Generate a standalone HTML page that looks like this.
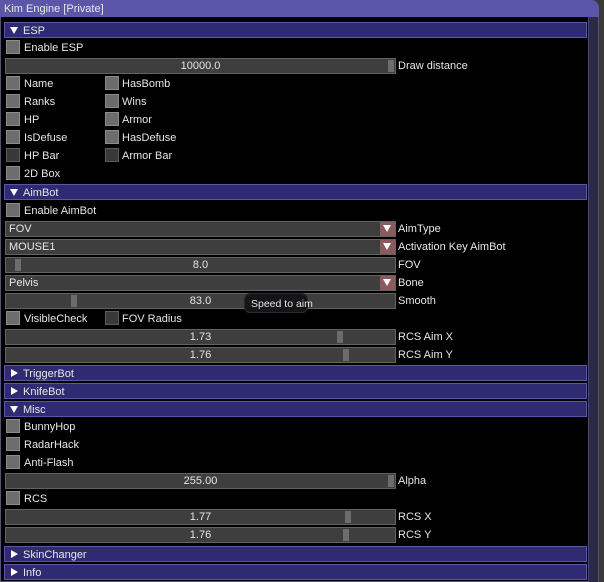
<!DOCTYPE html>
<html><head><style>
*{margin:0;padding:0;box-sizing:border-box}
body{width:604px;height:582px;background:#3a3838;position:relative;overflow:hidden;font-family:"Liberation Sans",sans-serif;font-size:11px;color:#e6e6e6}
.win{position:absolute;left:0;top:0;width:599px;height:582px;background:#000;border:1px solid #55537a;border-radius:0 8px 0 0}
.title{position:absolute;left:0;top:0;width:599px;height:17px;background:#5b56a8;border-radius:0 8px 0 0;padding:3px 0 0 4px;color:#e8e8f0}
.sb{position:absolute;left:588px;top:17px;width:10px;height:565px;background:#2b2a45;border-left:1px solid #4a4870}
.h{position:absolute;left:4px;width:583px;height:16px;background:#2f2b72;border:1px solid #5a56a4;padding:2px 0 0 18px}
.h:before{content:"";position:absolute;left:5px;top:4px;border-left:4px solid transparent;border-right:4px solid transparent;border-top:7px solid #fff}
.h.c:before{left:6px;top:3px;border-top:4px solid transparent;border-bottom:4px solid transparent;border-left:7px solid #fff;border-right:0}
.cb{position:absolute;width:14px;height:14px;background:#6c6c6c;border:1px solid #8c8c8c}
.cb.d{background:#383838;border-color:#5c5c5c}
.l{position:absolute;margin-top:1px}
.f{position:absolute;left:5px;width:391px;height:16px;background:#3e3e3e;border:1px solid #626262;text-align:center;line-height:15px}
.f.cm{text-align:left;padding-left:3px}
.g{position:absolute;top:1px;width:6px;height:12px;background:#6c6c6c}
.ar{position:absolute;right:0;top:0;width:15px;height:14px;background:#8a5a5e}
.ar:after{content:"";position:absolute;left:3px;top:3px;border-left:4px solid transparent;border-right:4px solid transparent;border-top:7px solid #fff}
.tt{position:absolute;left:244px;top:293px;width:64px;height:20px;background:#151518;border:1px solid #2a2a30;border-radius:6px;padding:4px 0 0 6px;font-size:10.5px;white-space:nowrap}
</style></head><body>
<div class="win"></div>
<div class="title">Kim Engine [Private]</div>
<div class="sb"></div>

<div class="h" style="top:22px">ESP</div>
<div class="cb" style="left:6px;top:40px"></div><div class="l" style="left:24px;top:41px">Enable ESP</div>
<div class="f" style="top:58px">10000.0<div class="g" style="left:382px"></div></div><div class="l" style="left:398px;top:59px">Draw distance</div>
<div class="cb" style="left:6px;top:76px"></div><div class="l" style="left:24px;top:77px">Name</div>
<div class="cb" style="left:105px;top:76px"></div><div class="l" style="left:122px;top:77px">HasBomb</div>
<div class="cb" style="left:6px;top:94px"></div><div class="l" style="left:24px;top:95px">Ranks</div>
<div class="cb" style="left:105px;top:94px"></div><div class="l" style="left:122px;top:95px">Wins</div>
<div class="cb" style="left:6px;top:112px"></div><div class="l" style="left:24px;top:113px">HP</div>
<div class="cb" style="left:105px;top:112px"></div><div class="l" style="left:122px;top:113px">Armor</div>
<div class="cb" style="left:6px;top:130px"></div><div class="l" style="left:24px;top:131px">IsDefuse</div>
<div class="cb" style="left:105px;top:130px"></div><div class="l" style="left:122px;top:131px">HasDefuse</div>
<div class="cb d" style="left:6px;top:148px"></div><div class="l" style="left:24px;top:149px">HP Bar</div>
<div class="cb d" style="left:105px;top:148px"></div><div class="l" style="left:122px;top:149px">Armor Bar</div>
<div class="cb" style="left:6px;top:166px"></div><div class="l" style="left:24px;top:167px">2D Box</div>

<div class="h" style="top:184px">AimBot</div>
<div class="cb" style="left:6px;top:203px"></div><div class="l" style="left:24px;top:204px">Enable AimBot</div>
<div class="f cm" style="top:221px">FOV<div class="ar"></div></div><div class="l" style="left:398px;top:222px">AimType</div>
<div class="f cm" style="top:239px">MOUSE1<div class="ar"></div></div><div class="l" style="left:398px;top:240px">Activation Key AimBot</div>
<div class="f" style="top:257px">8.0<div class="g" style="left:9px"></div></div><div class="l" style="left:398px;top:258px">FOV</div>
<div class="f cm" style="top:275px">Pelvis<div class="ar"></div></div><div class="l" style="left:398px;top:276px">Bone</div>
<div class="f" style="top:293px">83.0<div class="g" style="left:65px"></div></div><div class="l" style="left:398px;top:294px">Smooth</div>
<div class="cb" style="left:6px;top:311px"></div><div class="l" style="left:24px;top:312px">VisibleCheck</div>
<div class="cb d" style="left:105px;top:311px"></div><div class="l" style="left:122px;top:312px">FOV Radius</div>
<div class="f" style="top:329px">1.73<div class="g" style="left:331px"></div></div><div class="l" style="left:398px;top:330px">RCS Aim X</div>
<div class="f" style="top:347px">1.76<div class="g" style="left:337px"></div></div><div class="l" style="left:398px;top:348px">RCS Aim Y</div>

<div class="h c" style="top:365px">TriggerBot</div>
<div class="h c" style="top:383px">KnifeBot</div>
<div class="h" style="top:401px">Misc</div>
<div class="cb" style="left:6px;top:419px"></div><div class="l" style="left:24px;top:420px">BunnyHop</div>
<div class="cb" style="left:6px;top:437px"></div><div class="l" style="left:24px;top:438px">RadarHack</div>
<div class="cb" style="left:6px;top:455px"></div><div class="l" style="left:24px;top:456px">Anti-Flash</div>
<div class="f" style="top:473px">255.00<div class="g" style="left:382px"></div></div><div class="l" style="left:398px;top:474px">Alpha</div>
<div class="cb" style="left:6px;top:491px"></div><div class="l" style="left:24px;top:492px">RCS</div>
<div class="f" style="top:509px">1.77<div class="g" style="left:339px"></div></div><div class="l" style="left:398px;top:510px">RCS X</div>
<div class="f" style="top:527px">1.76<div class="g" style="left:337px"></div></div><div class="l" style="left:398px;top:528px">RCS Y</div>
<div class="h c" style="top:546px">SkinChanger</div>
<div class="h c" style="top:564px">Info</div>

<div class="tt">Speed to aim</div>
</body></html>
